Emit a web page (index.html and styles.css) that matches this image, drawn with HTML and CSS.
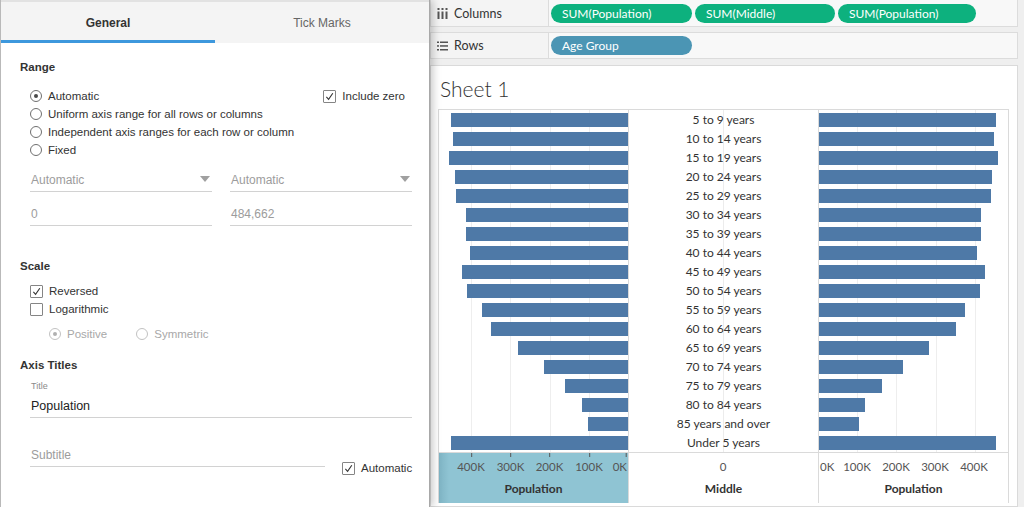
FILE: index.html
```html
<!DOCTYPE html>
<html lang="en">
<head>
<meta charset="utf-8">
<title>Axis editor</title>
<link rel="stylesheet" href="styles.css">
</head>
<body>
<div class="dialog">
  <div class="tabs">
    <div class="tab active">General</div>
    <div class="tab">Tick Marks</div>
  </div>
  <div class="content">
    <div class="section-title range-title">Range</div>
    <div class="range-block">
      <div class="opts">
        <div class="opt"><span class="radio checked"></span>Automatic</div>
        <div class="opt"><span class="radio"></span>Uniform axis range for all rows or columns</div>
        <div class="opt"><span class="radio"></span>Independent axis ranges for each row or column</div>
        <div class="opt"><span class="radio"></span>Fixed</div>
      </div>
      <div class="opt include-zero"><span class="check checked"><svg viewBox="0 0 12 12" width="12" height="12"><path d="M2.6 6.4 L5 9 L9.6 2.4" fill="none" stroke="#333" stroke-width="1.2"/></svg></span>Include zero</div>
    </div>
    <div class="field-row dropdowns">
      <div class="field muted">Automatic<svg class="arrow" viewBox="0 0 10 6" width="10" height="6"><polygon points="0,0 10,0 5,6" fill="#a0a0a0"/></svg></div>
      <div class="field muted">Automatic<svg class="arrow" viewBox="0 0 10 6" width="10" height="6"><polygon points="0,0 10,0 5,6" fill="#a0a0a0"/></svg></div>
    </div>
    <div class="field-row inputs">
      <div class="field muted">0</div>
      <div class="field muted">484,662</div>
    </div>

    <div class="section-title scale-title">Scale</div>
    <div class="checks">
      <div class="opt"><span class="check checked"><svg viewBox="0 0 12 12" width="12" height="12"><path d="M2.6 6.4 L5 9 L9.6 2.4" fill="none" stroke="#333" stroke-width="1.2"/></svg></span>Reversed</div>
      <div class="opt"><span class="check"></span>Logarithmic</div>
    </div>
    <div class="sub-opts">
      <div class="opt disabled"><span class="radio checked"></span>Positive</div>
      <div class="opt disabled sym"><span class="radio"></span>Symmetric</div>
    </div>

    <div class="section-title axis-title-head">Axis Titles</div>
    <div class="small-label">Title</div>
    <div class="field title-field">Population</div>
    <div class="subtitle-row">
      <div class="field muted subtitle-field">Subtitle</div>
      <div class="opt auto"><span class="check checked"><svg viewBox="0 0 12 12" width="12" height="12"><path d="M2.6 6.4 L5 9 L9.6 2.4" fill="none" stroke="#333" stroke-width="1.2"/></svg></span>Automatic</div>
    </div>
  </div>
</div>

<div class="workspace">
  <div class="shelf shelf-columns">
    <div class="shelf-label">
      <svg class="shelf-icon" viewBox="0 0 11 11" width="11" height="11"><rect x="0.5" y="0" width="2" height="2" fill="#555"/><rect x="4.5" y="0" width="2" height="2" fill="#555"/><rect x="8.5" y="0" width="2" height="2" fill="#555"/><rect x="0.5" y="3.5" width="2" height="7.5" fill="#555"/><rect x="4.5" y="3.5" width="2" height="7.5" fill="#555"/><rect x="8.5" y="3.5" width="2" height="7.5" fill="#555"/></svg>
      Columns
    </div>
    <div class="pills">
      <div class="pill green w1">SUM(Population)</div>
      <div class="pill green w2">SUM(Middle)</div>
      <div class="pill green w3">SUM(Population)</div>
    </div>
  </div>
  <div class="shelf shelf-rows">
    <div class="shelf-label">
      <svg class="shelf-icon" viewBox="0 0 11 10" width="11" height="10"><rect x="0" y="0.5" width="2" height="1.5" fill="#555"/><rect x="3" y="0.5" width="8" height="1.5" fill="#555"/><rect x="0" y="4.2" width="2" height="1.5" fill="#555"/><rect x="3" y="4.2" width="8" height="1.5" fill="#555"/><rect x="0" y="8" width="2" height="1.5" fill="#555"/><rect x="3" y="8" width="8" height="1.5" fill="#555"/></svg>
      Rows
    </div>
    <div class="pills">
      <div class="pill blue w1">Age Group</div>
    </div>
  </div>

  <div class="card">
    <div class="sheet-title">Sheet 1</div>
    <div class="chart">
      <div class="pane pane-left">
        <div class="row"><div class="bar" style="width:93.4%"></div></div>
        <div class="row"><div class="bar" style="width:92.4%"></div></div>
        <div class="row"><div class="bar" style="width:94.7%"></div></div>
        <div class="row"><div class="bar" style="width:91.3%"></div></div>
        <div class="row"><div class="bar" style="width:90.8%"></div></div>
        <div class="row"><div class="bar" style="width:85.8%"></div></div>
        <div class="row"><div class="bar" style="width:85.8%"></div></div>
        <div class="row"><div class="bar" style="width:83.7%"></div></div>
        <div class="row"><div class="bar" style="width:87.7%"></div></div>
        <div class="row"><div class="bar" style="width:85.3%"></div></div>
        <div class="row"><div class="bar" style="width:77.4%"></div></div>
        <div class="row"><div class="bar" style="width:72.4%"></div></div>
        <div class="row"><div class="bar" style="width:58.4%"></div></div>
        <div class="row"><div class="bar" style="width:44.6%"></div></div>
        <div class="row"><div class="bar" style="width:33.3%"></div></div>
        <div class="row"><div class="bar" style="width:24.4%"></div></div>
        <div class="row"><div class="bar" style="width:21.4%"></div></div>
        <div class="row"><div class="bar" style="width:93.8%"></div></div>
      </div>
      <div class="pane pane-mid">
        <div class="row">5 to 9 years</div>
        <div class="row">10 to 14 years</div>
        <div class="row">15 to 19 years</div>
        <div class="row">20 to 24 years</div>
        <div class="row">25 to 29 years</div>
        <div class="row">30 to 34 years</div>
        <div class="row">35 to 39 years</div>
        <div class="row">40 to 44 years</div>
        <div class="row">45 to 49 years</div>
        <div class="row">50 to 54 years</div>
        <div class="row">55 to 59 years</div>
        <div class="row">60 to 64 years</div>
        <div class="row">65 to 69 years</div>
        <div class="row">70 to 74 years</div>
        <div class="row">75 to 79 years</div>
        <div class="row">80 to 84 years</div>
        <div class="row">85 years and over</div>
        <div class="row">Under 5 years</div>
      </div>
      <div class="pane pane-right">
        <div class="row"><div class="bar" style="width:93.4%"></div></div>
        <div class="row"><div class="bar" style="width:92.4%"></div></div>
        <div class="row"><div class="bar" style="width:94.7%"></div></div>
        <div class="row"><div class="bar" style="width:91.3%"></div></div>
        <div class="row"><div class="bar" style="width:90.8%"></div></div>
        <div class="row"><div class="bar" style="width:85.8%"></div></div>
        <div class="row"><div class="bar" style="width:85.8%"></div></div>
        <div class="row"><div class="bar" style="width:83.7%"></div></div>
        <div class="row"><div class="bar" style="width:87.7%"></div></div>
        <div class="row"><div class="bar" style="width:85.3%"></div></div>
        <div class="row"><div class="bar" style="width:77.4%"></div></div>
        <div class="row"><div class="bar" style="width:72.4%"></div></div>
        <div class="row"><div class="bar" style="width:58.4%"></div></div>
        <div class="row"><div class="bar" style="width:44.6%"></div></div>
        <div class="row"><div class="bar" style="width:33.3%"></div></div>
        <div class="row"><div class="bar" style="width:24.4%"></div></div>
        <div class="row"><div class="bar" style="width:21.4%"></div></div>
        <div class="row"><div class="bar" style="width:93.8%"></div></div>
      </div>

      <div class="axis axis-left">
        <span class="tick" style="left:32px">400K</span>
        <span class="tick" style="left:71.5px">300K</span>
        <span class="tick" style="left:110.5px">200K</span>
        <span class="tick" style="left:150px">100K</span>
        <span class="tick tick-end" style="left:188px">0K</span>
        <div class="axis-name">Population</div>
      </div>
      <div class="axis axis-mid">
        <span class="tick" style="left:94px">0</span>
        <div class="axis-name">Middle</div>
      </div>
      <div class="axis axis-right">
        <span class="tick tick-start" style="left:0px">0K</span>
        <span class="tick" style="left:38px">100K</span>
        <span class="tick" style="left:77px">200K</span>
        <span class="tick" style="left:116px">300K</span>
        <span class="tick" style="left:155px">400K</span>
        <div class="axis-name">Population</div>
      </div>
    </div>
  </div>
</div>
</body>
</html>
```
FILE: styles.css
```css
* { box-sizing: border-box; }

html, body {
  margin: 0;
  padding: 0;
}

body {
  width: 1024px;
  height: 507px;
  overflow: hidden;
  display: flex;
  background: #efefef;
  font-family: "Liberation Sans", Arial, sans-serif;
}

/* ---------- dialog ---------- */
.dialog {
  width: 430px;
  flex: none;
  background: #fff;
  border-left: 1px solid #b9b9b9;
  border-right: 1px solid #a8a8a8;
  box-shadow: 3px 0 8px rgba(0, 0, 0, 0.22);
  position: relative;
  z-index: 2;
  color: #333;
  font-size: 11.5px;
}

.tabs {
  display: flex;
  height: 43px;
  background: #f4f4f4;
  border-top: 2px solid #e2e2e2;
}

.tab {
  flex: 1;
  display: flex;
  align-items: center;
  justify-content: center;
  padding-top: 1px;
  font-size: 12px;
  color: #666;
}

.tab.active {
  font-weight: bold;
  color: #333;
  box-shadow: inset 0 -3px #3d98dd;
}

.content {
  padding: 0 17px 0 19px;
}

.section-title {
  font-weight: bold;
  font-size: 11.5px;
  line-height: 16px;
  color: #333;
}

.range-title { margin-top: 16px; }
.scale-title { margin-top: 32px; }
.axis-title-head { margin-top: 14px; }

.range-block {
  display: flex;
  justify-content: space-between;
  align-items: flex-start;
  margin-top: 12px;
}

.opts, .checks {
  padding-left: 10px;
}

.opt {
  display: flex;
  align-items: center;
  height: 18px;
  gap: 6px;
  white-space: nowrap;
}

.include-zero {
  margin-right: 7px;
}

.radio {
  width: 12px;
  height: 12px;
  border: 1px solid #6f6f6f;
  border-radius: 50%;
  background: #fff;
  flex: none;
  display: flex;
  align-items: center;
  justify-content: center;
}

.radio.checked::after {
  content: "";
  width: 4px;
  height: 4px;
  border-radius: 50%;
  background: #4a4a4a;
}

.check {
  width: 13px;
  height: 13px;
  border: 1px solid #858585;
  border-radius: 1px;
  background: #fff;
  flex: none;
  display: flex;
  align-items: center;
  justify-content: center;
}

.check svg {
  display: block;
  width: 11px;
  height: 11px;
}

.field-row {
  display: flex;
  gap: 18px;
  padding-left: 10px;
}

.dropdowns { margin-top: 9px; }
.inputs { margin-top: 10px; }

.field {
  flex: 1;
  height: 24px;
  border-bottom: 1px solid #d2d2d2;
  display: flex;
  align-items: center;
  justify-content: space-between;
  font-size: 12px;
  color: #333;
  padding-left: 1px;
  padding-right: 1px;
}

.field.muted { color: #9c9c9c; }

.arrow {
  display: block;
  margin-right: 1px;
  margin-top: -1px;
}

.checks { margin-top: 8px; }

.sub-opts {
  display: flex;
  padding-left: 29px;
  margin-top: 7px;
  gap: 29px;
}

.opt.disabled { color: #a8a8a8; }
.opt.disabled .radio { border-color: #c2c2c2; }
.opt.disabled .radio.checked::after { background: #b0b0b0; }

.small-label {
  margin-top: 7px;
  padding-left: 11px;
  font-size: 9px;
  line-height: 12px;
  color: #8a8a8a;
}

.title-field {
  margin-top: 2px;
  margin-left: 10px;
  font-size: 12.5px;
  color: #222;
}

.subtitle-row {
  display: flex;
  align-items: flex-start;
  margin-top: 26px;
  padding-left: 10px;
}

.subtitle-field {
  flex: none;
  width: 295px;
  height: 23px;
}

.opt.auto {
  margin-left: 17px;
  margin-top: 15px;
}

/* ---------- workspace ---------- */
.workspace {
  flex: 1;
  display: flex;
  flex-direction: column;
  padding-right: 6px;
  font-family: Lato, "Open Sans", sans-serif;
  min-width: 0;
}

.shelf {
  display: flex;
  background: #f8f8f8;
  border: 1px solid #dcdcdc;
}

.shelf-columns {
  height: 27px;
  border-top: none;
}

.shelf-rows {
  height: 27px;
  margin-top: 5px;
}

.shelf-label {
  width: 118px;
  flex: none;
  display: flex;
  align-items: center;
  gap: 6px;
  padding-left: 6px;
  border-right: 1px solid #dcdcdc;
  background: #f4f4f4;
  font-size: 12.5px;
  color: #333;
}

.shelf-icon { display: block; }

.pills {
  display: flex;
  align-items: center;
  gap: 3px;
  padding-left: 2px;
}

.pill {
  height: 19px;
  border-radius: 10px;
  color: #fff;
  font-size: 12px;
  line-height: 19px;
  padding-left: 11px;
  white-space: nowrap;
}

.pill.green { background: #0db17e; }
.pill.blue { background: #4b95b4; }
.pill.w1 { width: 141px; }
.pill.w2 { width: 140px; }
.pill.w3 { width: 138px; }

.card {
  flex: 1;
  margin-top: 6px;
  background: #fff;
  border: 1px solid #dadada;
  padding: 11px 0 0 7px;
}

.sheet-title {
  font-size: 21px;
  font-weight: 300;
  line-height: 24px;
  color: #333;
  margin-bottom: 8px;
  padding-left: 2px;
}

.chart {
  display: grid;
  grid-template-columns: 189px 189px 189px;
  grid-template-rows: 342px 50px;
  gap: 1px;
  width: 571px;
  background: #dadada;
  border: 1px solid #dadada;
  border-bottom: none;
}

.pane {
  display: flex;
  flex-direction: column;
  background-color: #fff;
}

.pane-left {
  background-image: repeating-linear-gradient(to left, transparent 0, transparent 38.2px, #eeeeee 38.2px, #eeeeee 39.2px);
}

.pane-right {
  background-image: repeating-linear-gradient(to right, transparent 0, transparent 38.2px, #eeeeee 38.2px, #eeeeee 39.2px);
}

.pane-mid {
  background-image: linear-gradient(#ececec, #ececec);
  background-size: 1px 100%;
  background-position: center;
  background-repeat: no-repeat;
}

.row {
  height: 19px;
  display: flex;
  align-items: center;
}

.pane-left .row { justify-content: flex-end; }
.pane-right .row { justify-content: flex-start; }

.pane-mid .row {
  justify-content: center;
  font-size: 12px;
  color: #333;
}

.bar {
  height: 14px;
  background: #4e79a7;
}

.axis {
  position: relative;
  background: #fff;
  font-size: 11.5px;
  color: #555;
}

.axis-left {
  background: linear-gradient(to right, #7fb4c4 0, #8fc4d3 10px, #8fc4d3 100%);
}

.tick {
  position: absolute;
  top: 7px;
  line-height: 14px;
  transform: translateX(-50%);
  white-space: nowrap;
}

.axis-left .tick::before {
  content: "";
  position: absolute;
  left: 50%;
  top: -7px;
  width: 1px;
  height: 4px;
  background: #555;
}

.tick.tick-end { transform: translateX(-100%); }
.axis-left .tick.tick-end::before { left: auto; right: 0; }
.tick.tick-start { transform: translateX(1px); }

.axis-name {
  padding-top: 28px;
  text-align: center;
  font-size: 12px;
  line-height: 16px;
  font-weight: bold;
  color: #333;
}
```
